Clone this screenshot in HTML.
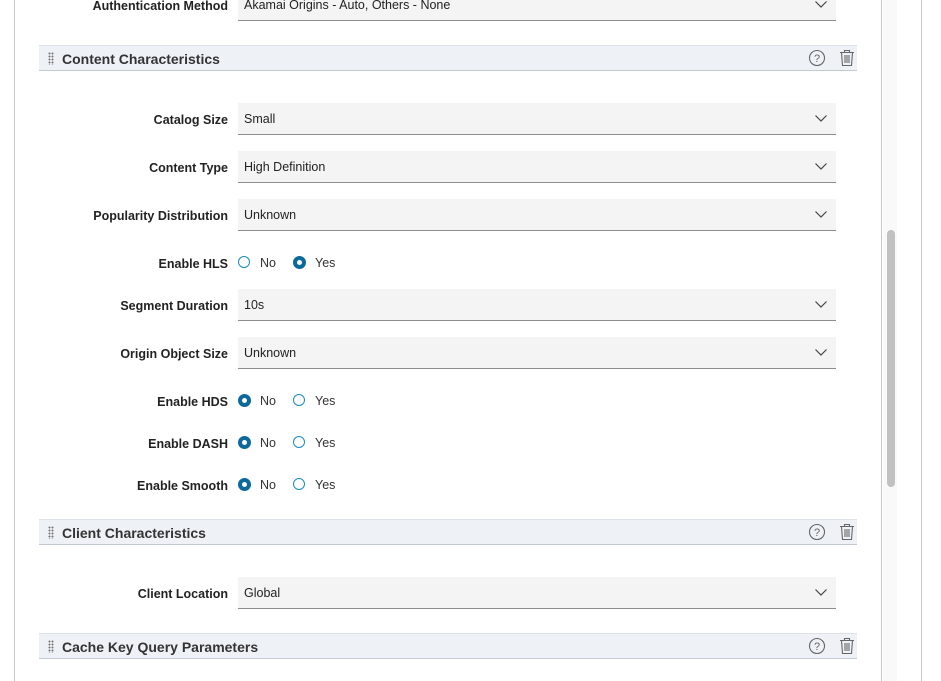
<!DOCTYPE html>
<html><head><style>
body{margin:0;width:941px;height:681px;overflow:hidden;background:#fff;font-family:"Liberation Sans",sans-serif;position:relative;color:#222}
.vl{position:absolute;top:0;height:681px;width:1px;background:#c8c8c8}
.sec{position:absolute;left:39px;width:818px;height:24px;background:#eef2f6;border-top:1px solid #dde2e8;border-bottom:1px solid #c4cad2}
.sec .t{position:absolute;left:23px;top:5px;font-size:14px;font-weight:bold;color:#333}
.sec .g{position:absolute;left:9px;top:6px;width:6px;height:13px;background-image:radial-gradient(circle,#777 0.9px,transparent 1.1px);background-size:3px 3px}
.sec svg{position:absolute;top:3px}
.lbl{position:absolute;right:713px;font-size:12.5px;font-weight:bold;color:#222;white-space:nowrap}
.sel{position:absolute;left:238px;width:598px;height:31px;background:#f4f4f4;border-bottom:1px solid #8d8d8d;font-size:12.5px}
.sel span{position:absolute;left:6px;top:9px;color:#222}
.sel svg{position:absolute;right:9px;top:12px}
.rad{position:absolute;width:10px;height:10px;border-radius:50%;border:1.5px solid #1a8bc4}
.rad.on{border:4px solid #0b6a9a;width:5px;height:5px;background:#fff}
.rt{position:absolute;font-size:12.5px;color:#333}
</style></head><body>
<div class="vl" style="left:14px"></div>
<div class="vl" style="left:881px"></div>
<div style="position:absolute;left:883px;top:0;width:14px;height:681px;background:#f9f9f9"></div>
<div style="position:absolute;left:887px;top:230px;width:8px;height:257px;border-radius:4px;background:#c1c1c1"></div>
<div class="vl" style="left:921px"></div>
<div id="c"></div>
<script>
const chev='<svg width="12" height="7" viewBox="0 0 12 7"><path d="M0.5 0.5l5.5 5.5 5.5-5.5" fill="none" stroke="#444" stroke-width="1.2"/></svg>';
const icons='<svg style="left:769px" width="18" height="18" viewBox="0 0 18 18"><circle cx="9" cy="9" r="7.5" fill="none" stroke="#666" stroke-width="1.1"/><text x="9" y="13" font-size="11" text-anchor="middle" fill="#666" font-family="Liberation Sans">?</text></svg><svg style="left:799px" width="18" height="18" viewBox="0 0 18 18"><path d="M2 3.5h14M6.5 3.5V1.5h5v2M3.5 3.5l1 13h9l1-13M7 6v8M9 6v8M11 6v8" fill="none" stroke="#666" stroke-width="1.1"/></svg>';
let h='';
function sec(y,t){h+=`<div class="sec" style="top:${y}px"><div class="g"></div><div class="t">${t}</div>${icons}</div>`}
function sel(y,l,v){h+=`<div class="lbl" style="top:${y+10}px">${l}</div><div class="sel" style="top:${y}px"><span>${v}</span>${chev}</div>`}
function rad(y,l,yes){h+=`<div class="lbl" style="top:${y+1}px">${l}</div><div class="rad ${yes?'':'on'}" style="left:238px;top:${y}px"></div><div class="rt" style="left:260px;top:${y}px">No</div><div class="rad ${yes?'on':''}" style="left:293px;top:${y}px"></div><div class="rt" style="left:315px;top:${y}px">Yes</div>`}
sel(-11,'Authentication Method','Akamai Origins - Auto, Others - None');
sec(45,'Content Characteristics');
sel(103,'Catalog Size','Small');
sel(151,'Content Type','High Definition');
sel(199,'Popularity Distribution','Unknown');
rad(256,'Enable HLS',true);
sel(289,'Segment Duration','10s');
sel(337,'Origin Object Size','Unknown');
rad(394,'Enable HDS',false);
rad(436,'Enable DASH',false);
rad(478,'Enable Smooth',false);
sec(519,'Client Characteristics');
sel(577,'Client Location','Global');
sec(633,'Cache Key Query Parameters');
document.getElementById('c').innerHTML=h;
</script>
</body></html>
